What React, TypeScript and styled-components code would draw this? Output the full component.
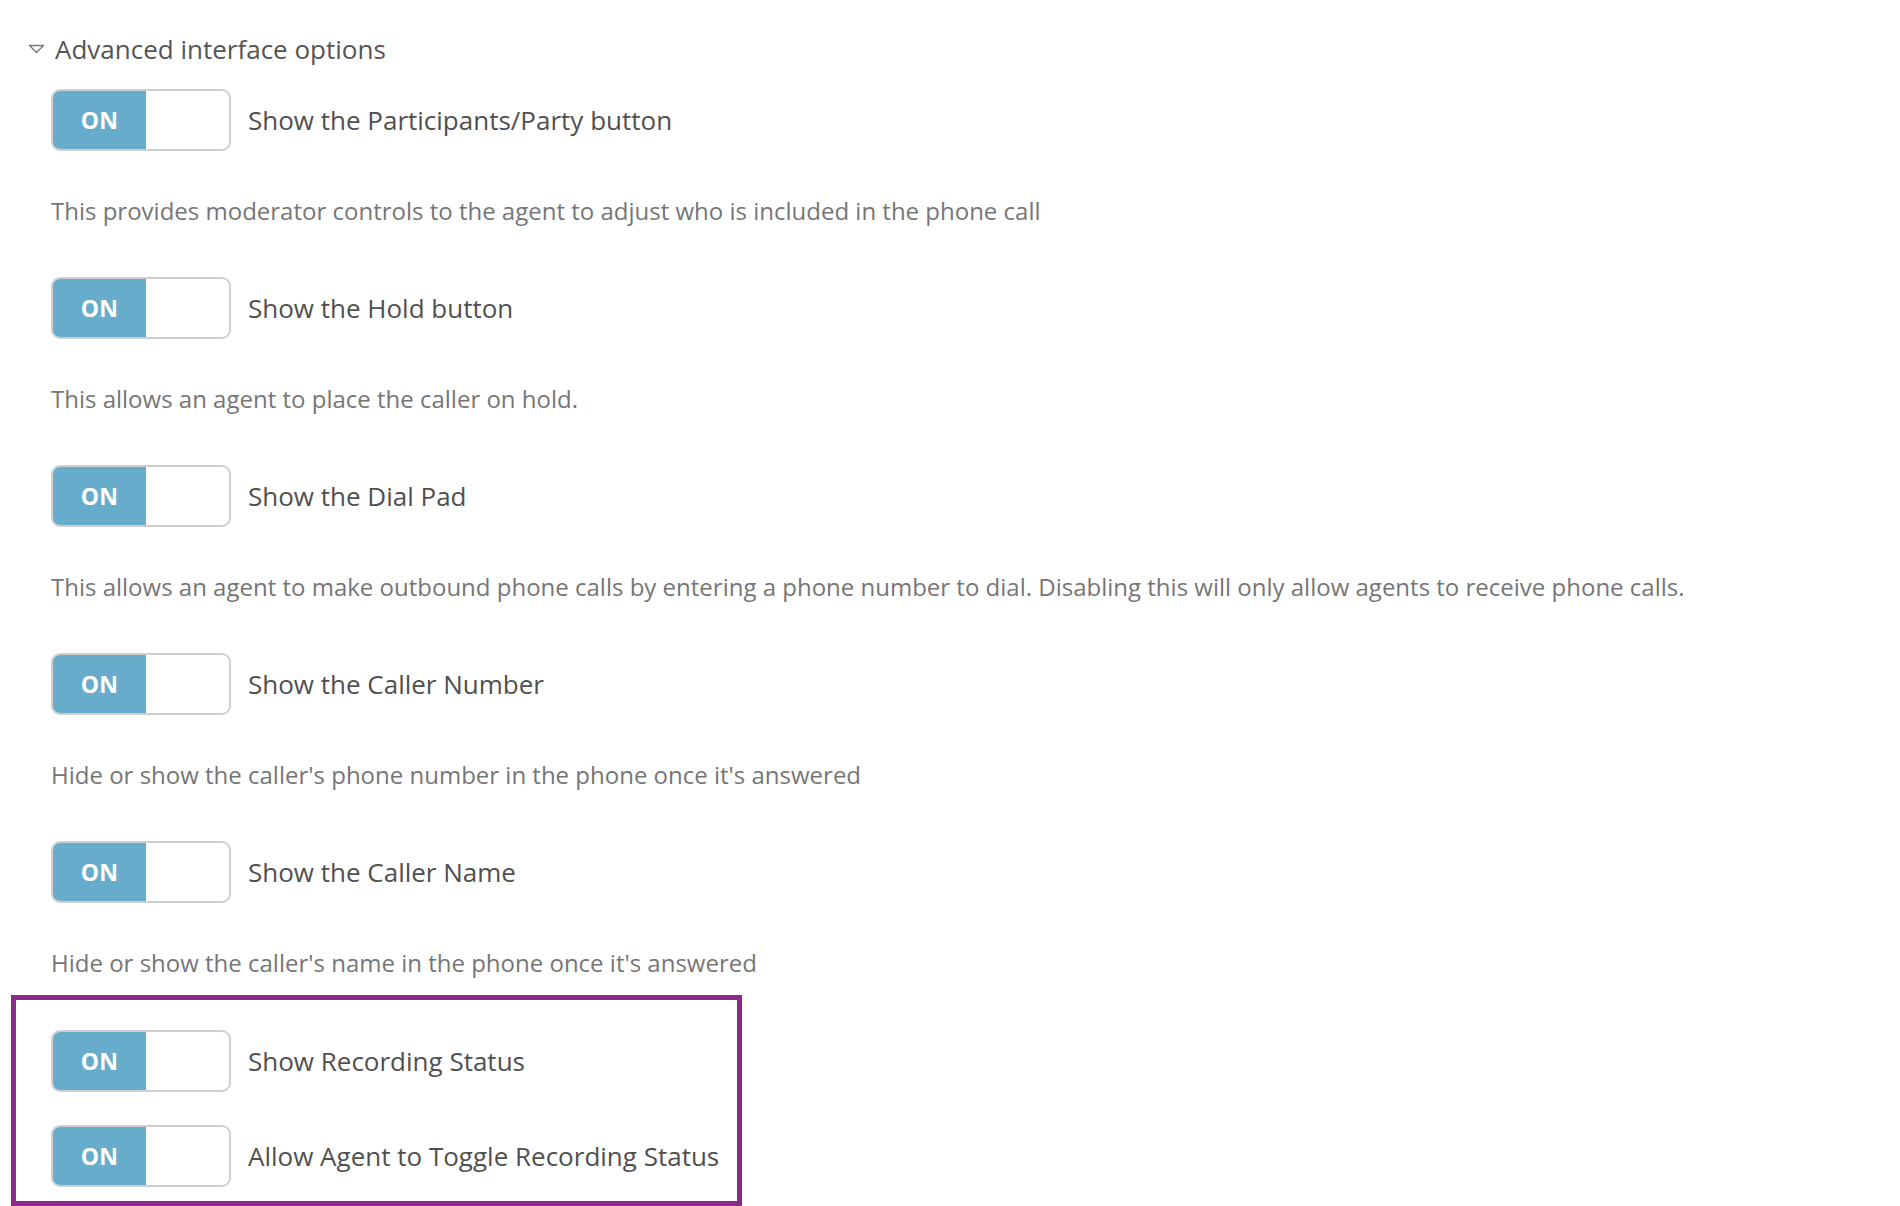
import React from "react";
import styled, { createGlobalStyle } from "styled-components";

const GlobalStyle = createGlobalStyle`
  html, body {
    margin: 0;
    padding: 0;
    background: #ffffff;
  }
  body {
    font-family: "Open Sans", "Noto Sans", "Liberation Sans", sans-serif;
    -webkit-font-smoothing: antialiased;
  }
`;

const Page = styled.div`
  display: flex;
  flex-direction: column;
  padding: 30px 0 0 0;
  width: 1900px;
  height: 1206px;
  box-sizing: border-box;
  overflow: hidden;
`;

const Header = styled.div`
  display: flex;
  align-items: center;
  height: 40px;
  padding-left: 28px;
  gap: 10px;
  color: #555555;
  font-size: 26px;
`;

const Caret = styled.svg`
  width: 17px;
  height: 10px;
  flex: none;
`;

const Options = styled.div`
  display: flex;
  flex-direction: column;
  padding-left: 51px;
  margin-top: 21px;
`;

const Row = styled.div`
  display: flex;
  align-items: center;
  gap: 17px;
  height: 62px;
`;

const Toggle = styled.div`
  display: flex;
  width: 180px;
  height: 62px;
  box-sizing: border-box;
  border: 2px solid #cfcfcf;
  border-radius: 9px;
  overflow: hidden;
  background: #ffffff;
  flex: none;
`;

const OnPart = styled.div`
  width: 93px;
  display: flex;
  align-items: center;
  justify-content: center;
  background: #67adcb;
  color: #ffffff;
  font-weight: 700;
  font-size: 23px;
  letter-spacing: 0.2px;
`;

const Label = styled.span`
  color: #505050;
  font-size: 26px;
  line-height: 34px;
`;

const Description = styled.p<{ $last?: boolean }>`
  margin: 45px 0 ${(p) => (p.$last ? "17px" : "51px")} 0;
  line-height: 30px;
  font-size: 24px;
  color: #767676;
  white-space: nowrap;
`;

const Highlight = styled.div`
  display: flex;
  flex-direction: column;
  gap: 33px;
  width: 731px;
  box-sizing: border-box;
  margin-left: -40px;
  padding: 30px 0 14px 35px;
  border: 5px solid #8a2b8b;
`;

type Opt = { label: string; desc: string };

const options: Opt[] = [
  {
    label: "Show the Participants/Party button",
    desc: "This provides moderator controls to the agent to adjust who is included in the phone call",
  },
  {
    label: "Show the Hold button",
    desc: "This allows an agent to place the caller on hold.",
  },
  {
    label: "Show the Dial Pad",
    desc: "This allows an agent to make outbound phone calls by entering a phone number to dial. Disabling this will only allow agents to receive phone calls.",
  },
  {
    label: "Show the Caller Number",
    desc: "Hide or show the caller's phone number in the phone once it's answered",
  },
  {
    label: "Show the Caller Name",
    desc: "Hide or show the caller's name in the phone once it's answered",
  },
];

const Switch = () => (
  <Toggle>
    <OnPart>ON</OnPart>
  </Toggle>
);

export default function App() {
  return (
    <>
      <GlobalStyle />
      <Page>
        <Header>
          <Caret viewBox="0 0 17 10">
            <polygon
              points="1.5,1.5 15.5,1.5 8.5,8.5"
              fill="none"
              stroke="#777777"
              strokeWidth="1.4"
              strokeLinejoin="round"
            />
          </Caret>
          Advanced interface options
        </Header>
        <Options>
          {options.map((o, i) => (
            <React.Fragment key={o.label}>
              <Row>
                <Switch />
                <Label>{o.label}</Label>
              </Row>
              <Description $last={i === options.length - 1}>{o.desc}</Description>
            </React.Fragment>
          ))}
          <Highlight>
            <Row>
              <Switch />
              <Label>Show Recording Status</Label>
            </Row>
            <Row>
              <Switch />
              <Label>Allow Agent to Toggle Recording Status</Label>
            </Row>
          </Highlight>
        </Options>
      </Page>
    </>
  );
}
